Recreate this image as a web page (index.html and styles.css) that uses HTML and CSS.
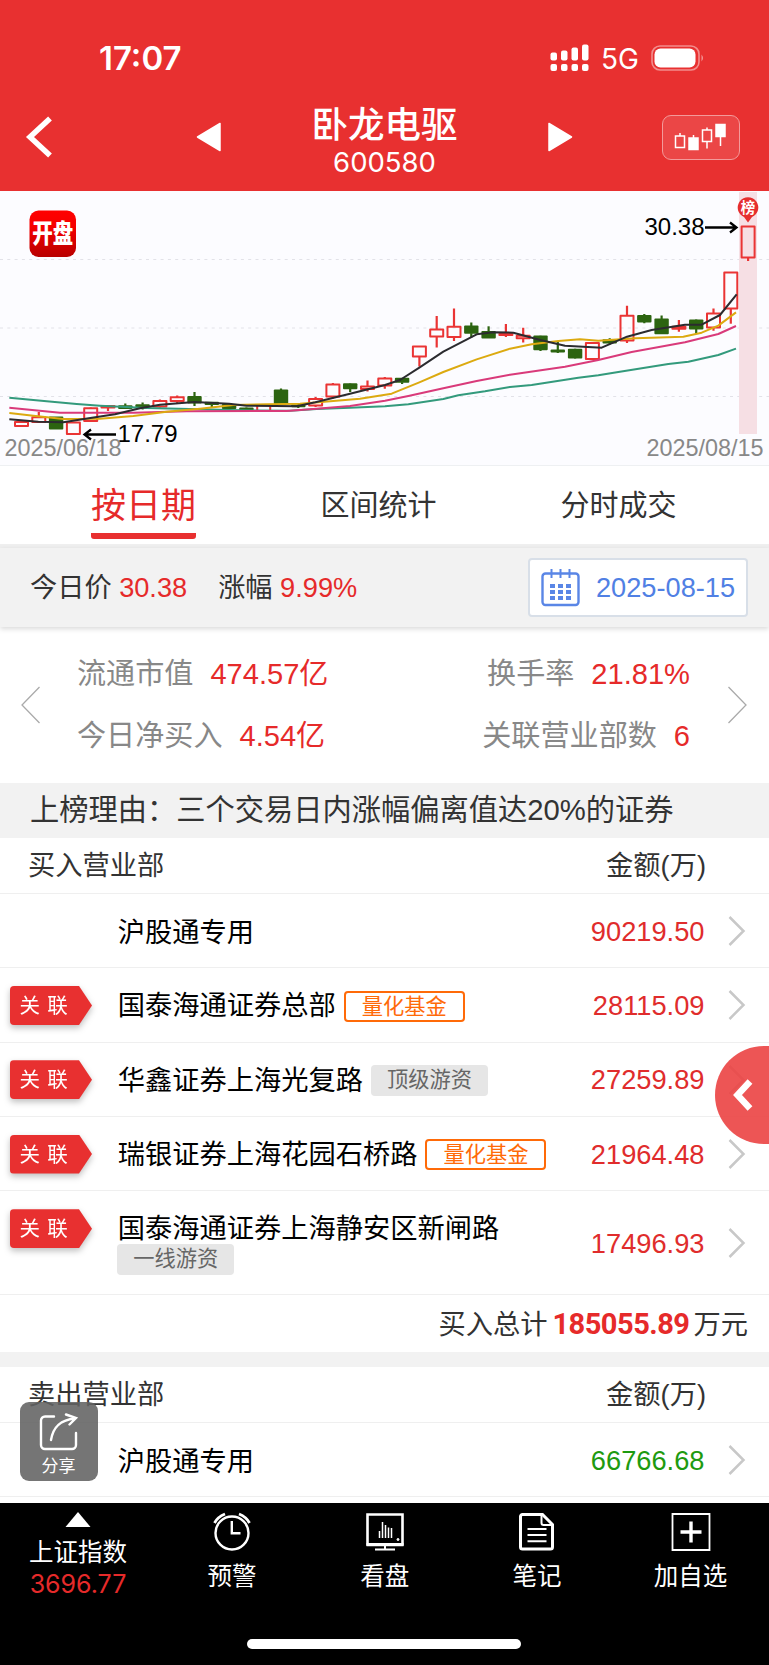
FILE: index.html
```html
<!DOCTYPE html>
<html lang="zh-CN">
<head>
    <meta charset="UTF-8">
    <meta name="viewport" content="width=device-width, initial-scale=1.0">
    <title>卧龙电驱 600580</title>
    <link rel="stylesheet" href="styles.css">
</head>
<body>
    <header class="header">
        <div class="status">
            <span class="time">17:07</span>
            <svg class="signal" width="40" height="28" viewBox="0 0 40 28" fill="#fff">
                <rect x="0.5" y="8.5" width="6.500" height="8" rx="2"/><rect x="11" y="6.5" width="6.500" height="10" rx="2"/>
                <rect x="21.5" y="3.5" width="6.500" height="13" rx="2"/><rect x="32" y="0.5" width="6.500" height="16" rx="2"/>
                <rect x="0.5" y="20" width="6.500" height="7" rx="2"/><rect x="11" y="20" width="6.500" height="7" rx="2"/>
                <rect x="21.5" y="20" width="6.500" height="7" rx="2"/><rect x="32" y="20" width="6.500" height="7" rx="2"/>
            </svg>
            <span class="net">5G</span>
            <svg class="battery" width="54" height="26" viewBox="0 0 54 26">
                <rect x="1" y="1" width="47" height="24" rx="8" fill="none" stroke="#fff" stroke-opacity=".45" stroke-width="1.6"/>
                <rect x="3.5" y="3.5" width="41" height="19" rx="6" fill="#fff"/>
                <path d="M50.5 9.5q3 3.5 0 7z" fill="#fff" fill-opacity=".5"/>
            </svg>
        </div>
        <div class="nav">
            <svg class="back" width="28" height="42" viewBox="0 0 28 42"><path d="M25 2.5L5 21L25 39.5" fill="none" stroke="#fff" stroke-width="5.5"/></svg>
            <svg class="prev" width="26" height="30" viewBox="0 0 26 30"><path d="M24 1.5V28.5L1.5 15z" fill="#fff" stroke="#fff" stroke-width="1.5" stroke-linejoin="round"/></svg>
            <div class="title">
                <h1>卧龙电驱</h1>
                <p>600580</p>
            </div>
            <svg class="next" width="26" height="30" viewBox="0 0 26 30"><path d="M2 1.5V28.5L24.5 15z" fill="#fff" stroke="#fff" stroke-width="1.5" stroke-linejoin="round"/></svg>
            <div class="kline-btn">
                <svg width="54" height="28" viewBox="0 0 54 28" fill="none" stroke="#fff" stroke-width="1.5">
                    <path d="M1.5 13h9v11.5h-9zM6 10v3M28.5 7h9v11.5h-9zM33 4.5v2.5M33 18.5v7M46.5 13v10M19.5 12v3"/>
                    <path d="M15 15h9v11.5h-9zM42 1.5h9v12h-9z" fill="#fff"/>
                </svg>
            </div>
        </div>
    </header>

    <section class="chart">
        <svg width="769" height="274" viewBox="0 0 769 274">
            <defs>
                <linearGradient id="logoBg" x1="0" y1="0" x2="0" y2="1">
                    <stop offset="0" stop-color="#ff0000"/>
                    <stop offset=".35" stop-color="#f50000"/>
                    <stop offset="1" stop-color="#b80000"/>
                </linearGradient>
            </defs>
            <g stroke="#e2e2e8" stroke-dasharray="3 4.3">
                <path d="M0 68.5H769M0 137H769M0 205.5H769"/>
            </g>
            <rect x="739" y="1" width="18" height="242" fill="#f6dfe4"/>
            <g id="candles"></g>
            <g transform="translate(0 -1) scale(.33333)" fill="none" stroke-width="6" stroke-linejoin="round">
                <polyline stroke="#339a7c" points="28,623 140,634 230,642 300,647 440,654 600,658 720,661 870,662 950,657 1050,653 1155,649 1225,643 1330,627 1375,616 1455,604 1530,591 1595,585 1735,563 1795,556 1855,546 2005,522 2065,515 2155,495 2208,476"/>
                <polyline stroke="#d93a7a" points="28,653 180,668 400,668 560,664 860,663 950,656 1050,648 1155,632 1225,618 1330,595 1430,573 1530,554 1695,530 1795,510 1895,486 2055,457 2155,432 2208,408"/>
                <polyline stroke="#dcaa10" points="28,669 100,677 190,687 300,686 400,678 500,665 600,656 700,645 800,643 900,641 1000,633 1080,626 1175,611 1258,577 1330,546 1430,508 1530,476 1595,463 1675,453 1740,448 1795,452 1905,445 2050,440 2105,428 2155,407 2208,367"/>
                <polyline stroke="#2b2b2f" points="28,688 115,695 190,697 271,684 345,673 420,655 480,644 583,636 687,641 740,647 890,649 946,637 1050,611 1155,585 1200,570 1258,533 1330,485 1430,433 1480,427 1540,428 1621,450 1695,467 1805,473 1881,440 1955,420 2055,404 2105,404 2160,375 2210,313"/>
            </g>
            <g fill="none" stroke="#000" stroke-width="2.3">
                <path d="M116 243.5H85M91 238.5L84.5 243.5L91 248.5M705 36.5H736M730 31.5L736.5 36.5L730 41.5"/>
            </g>
            <path d="M748 31.5l-4-5.5a10.3 10.3 0 1 1 8 0z" fill="#e62e2e"/>
            <text x="748" y="22.3" class="pin-text">榜</text>
            <text x="644.5" y="43.5" class="mark">30.38</text>
            <text x="117.5" y="250.8" class="mark">17.79</text>
            <text x="4.5" y="265" class="day">2025/06/18</text>
            <text x="763.5" y="265" class="day end">2025/08/15</text>
            <rect x="29.5" y="19.5" width="46.5" height="46.5" rx="9" fill="url(#logoBg)"/>
            <text transform="translate(52.8 52.3) scale(1 1.27)" class="logo-text">开盘</text>
        </svg>
    </section>

    <nav class="tabs">
        <div class="tab active"><span>按日期</span></div>
        <div class="tab"><span>区间统计</span></div>
        <div class="tab"><span>分时成交</span></div>
    </nav>

    <section class="price-bar">
        <span>今日价 <b>30.38</b></span>
        <span class="change">涨幅 <b>9.99%</b></span>
        <div class="date-box">
            <svg width="40" height="40" viewBox="0 0 40 40" fill="none" stroke="#5a86e6" stroke-width="2.4">
                <rect x="1.5" y="5.5" width="36" height="31.5" rx="3"/>
                <path d="M10.5 1v9M19.5 1v9M28.5 1v9" stroke-width="2"/>
                <path d="M9 18h21M9 24h21M9 30h21" stroke-width="4" stroke-dasharray="5 3"/>
            </svg>
            <span>2025-08-15</span>
        </div>
    </section>

    <section class="stats">
        <svg width="20" height="38" viewBox="0 0 20 38" fill="none" stroke="#aaa" stroke-width="1.3"><path d="M18.5 1L1 19L18.5 37"/></svg>
        <div class="stats-grid">
            <p>流通市值<b>474.57亿</b></p>
            <p>换手率<b>21.81%</b></p>
            <p>今日净买入<b>4.54亿</b></p>
            <p>关联营业部数<b>6</b></p>
        </div>
        <svg width="20" height="38" viewBox="0 0 20 38" fill="none" stroke="#aaa" stroke-width="1.3"><path d="M.5 1L18 19L.5 37"/></svg>
    </section>

    <div class="reason">上榜理由：三个交易日内涨幅偏离值达20%的证券</div>

    <section class="list">
        <div class="list-head"><span>买入营业部</span><span>金额(万)</span></div>
        <div class="row">
            <div class="name">沪股通专用</div>
            <div class="amount">90219.50</div>
            <svg class="arrow" viewBox="0 0 18 30"><path d="M1.5 1L15.5 15L1.5 29"/></svg>
        </div>
        <div class="row">
            <div class="link"><span>关 联</span></div>
            <div class="name">国泰海通证券总部<i class="tag quant">量化基金</i></div>
            <div class="amount">28115.09</div>
            <svg class="arrow" viewBox="0 0 18 30"><path d="M1.5 1L15.5 15L1.5 29"/></svg>
        </div>
        <div class="row">
            <div class="link"><span>关 联</span></div>
            <div class="name">华鑫证券上海光复路<i class="tag">顶级游资</i></div>
            <div class="amount">27259.89</div>
            <svg class="arrow" viewBox="0 0 18 30"><path d="M1.5 1L15.5 15L1.5 29"/></svg>
        </div>
        <div class="row">
            <div class="link"><span>关 联</span></div>
            <div class="name">瑞银证券上海花园石桥路<i class="tag quant">量化基金</i></div>
            <div class="amount">21964.48</div>
            <svg class="arrow" viewBox="0 0 18 30"><path d="M1.5 1L15.5 15L1.5 29"/></svg>
        </div>
        <div class="row tall">
            <div class="link"><span>关 联</span></div>
            <div class="name">国泰海通证券上海静安区新闸路<br><i class="tag">一线游资</i></div>
            <div class="amount">17496.93</div>
            <svg class="arrow" viewBox="0 0 18 30"><path d="M1.5 1L15.5 15L1.5 29"/></svg>
        </div>
        <div class="total"><span>买入总计</span><b>185055.89</b><span>万元</span></div>
    </section>

    <section class="list sell">
        <div class="list-head"><span>卖出营业部</span><span>金额(万)</span></div>
        <div class="row">
            <div class="name">沪股通专用</div>
            <div class="amount green">66766.68</div>
            <svg class="arrow" viewBox="0 0 18 30"><path d="M1.5 1L15.5 15L1.5 29"/></svg>
        </div>
    </section>

    <div class="drawer">
        <svg width="20" height="32" viewBox="0 0 20 32"><path d="M17 2.5L4.500 16L17 29.500" fill="none" stroke="#fff" stroke-width="6.5"/></svg>
    </div>

    <div class="share">
        <svg width="40" height="38" viewBox="0 0 40 38" fill="none" stroke="#fff" stroke-width="2.4" stroke-linecap="round">
            <path d="M15 3.5H6a4 4 0 0 0-4 4V32a4 4 0 0 0 4 4H33a4 4 0 0 0 4-4V20"/>
            <path d="M12 27C14 15 20 7 36 5.5M27 1.5L37 5L30.5 11.5"/>
        </svg>
        <span>分享</span>
    </div>

    <footer class="bottom">
        <div class="index">
            <svg width="26" height="15" viewBox="0 0 26 15"><path d="M13 0L25.5 15H.5z" fill="#fff"/></svg>
            <span>上证指数</span>
            <b>3696.77</b>
        </div>
        <div class="item">
            <svg width="40" height="40" viewBox="0 0 40 40" fill="none" stroke="#fff" stroke-width="2.4">
                <circle cx="20" cy="22" r="16.5"/>
                <path d="M19.8 10v12.300H28.5" stroke-width="2.4"/>
                <path d="M2.5 12Q5.5 6 13 3M37.5 12Q34.5 6 27 3" stroke-width="2.8"/>
            </svg>
            <span>预警</span>
        </div>
        <div class="item">
            <svg width="40" height="40" viewBox="0 0 40 40" fill="none" stroke="#fff">
                <path d="M2.5 3.5H37.5V33.5H2.5z" stroke-width="2.6"/>
                <path d="M1.5 33.7H38.5" stroke-width="3.2"/>
                <path d="M20 35v3M10 38.5H30" stroke-width="2"/>
                <path d="M14.5 20v7M17.5 11v16M20.5 14v13M23.5 16.5v10.5M26.5 17v10" stroke-width="1.5"/>
                <circle cx="33" cy="28.5" r="1" fill="#fff"/>
            </svg>
            <span>看盘</span>
        </div>
        <div class="item">
            <svg width="40" height="40" viewBox="0 0 40 40" fill="none" stroke="#fff" stroke-width="2.4">
                <path d="M5.5 3.5H25.5L35.500 13.5V36a2 2 0 0 1-2 2H5.5a2 2 0 0 1-2-2V5.5a2 2 0 0 1 2-2z" stroke-width="3"/>
                <path d="M24.5 4v8a2 2 0 0 0 2 2H35" stroke-width="2"/>
                <path d="M10.5 18h19M10.5 24h19M10.5 30.3h19" stroke-width="2"/>
            </svg>
            <span>笔记</span>
        </div>
        <div class="item">
            <svg width="40" height="40" viewBox="0 0 40 40" fill="none" stroke="#fff">
                <path d="M1.500 3H38.500V39H1.500z" stroke-width="1.8"/>
                <path d="M20 10.5v21M9.5 21h21" stroke-width="3.4"/>
            </svg>
            <span>加自选</span>
        </div>
        <div class="home-line"></div>
    </footer>

    <script>
        // [high, body top, body bottom, low, 1 = up / 0 = down]
        const candles = [
            [231, 231, 235, 235, 1], [221, 226.3, 231, 231, 1], [226, 226, 238, 238, 0], [231.5, 231.5, 243, 243, 1],
            [216.5, 217.3, 230, 230, 1], [214.5, 215, 216.5, 220, 1], [212.5, 214.8, 217.5, 218, 0], [211.5, 213.8, 216, 218.5, 0],
            [208.5, 210, 215.5, 216.5, 1], [204.5, 206.3, 210, 212, 1], [201, 205.5, 212, 215, 0], [211, 211.3, 213.5, 216, 0],
            [212.5, 213.5, 217.5, 218, 0], [216.5, 217, 220.5, 221, 0], [214, 214.3, 220, 220, 1], [197.5, 199, 212.5, 213, 0],
            [212.7, 214, 215.7, 217, 0], [206, 208, 214.5, 216, 1], [192, 193.5, 205.5, 207.5, 1], [192.3, 192.7, 197.7, 201, 0],
            [189.5, 195.5, 198, 200.5, 1], [186, 187.5, 194.5, 197.7, 1], [187, 187.3, 191.3, 193, 0], [155.5, 155.5, 165.5, 175.5, 1],
            [125, 138.5, 145.5, 156.5, 1], [117.5, 135.7, 146, 150, 1], [131.5, 135, 142.3, 146.5, 0], [135.3, 140.5, 147, 147, 0],
            [133, 143, 144, 146, 1], [136.7, 144.7, 147.3, 151.5, 1], [144.7, 145, 158.7, 160, 0], [150, 159, 161, 162, 0],
            [157.7, 158.3, 167, 167.5, 0], [152, 152, 168, 168, 1], [147.3, 148.7, 152, 153.5, 0], [114.7, 124.8, 149.5, 152, 1],
            [123, 124.5, 131, 132.3, 0], [124.5, 128, 142.7, 143, 0], [129, 135.7, 137.7, 140.7, 1], [128.5, 129, 138, 142.7, 0],
            [117.5, 122.5, 136.5, 139.7, 1], [81.5, 81.5, 117.5, 132.7, 1], [35.5, 35.5, 66.5, 70, 1]
        ];
        let svg = '';
        candles.forEach(([high, top, bottom, low, up], i) => {
            const x = 21.5 + i * 17.3;
            const color = up ? '#ea3434' : '#2c6410';
            svg += `<path d="M${x} ${high}V${top}M${x} ${bottom}V${low}" stroke="${color}" stroke-width="2.2"/>`;
            svg += up
                ? `<rect x="${x - 6.5}" y="${top}" width="13" height="${bottom - top}" fill="none" stroke="${color}" stroke-width="2" stroke-linejoin="round"/>`
                : `<rect x="${x - 7.2}" y="${top - .5}" width="14.4" height="${bottom - top + 1}" rx="1" fill="${color}"/>`;
        });
        document.getElementById('candles').innerHTML = svg;
    </script>
</body>
</html>
```

FILE: styles.css
```css
* {
    box-sizing: border-box;
}
body {
    margin: 0;
    width: 769px;
    height: 1665px;
    overflow: hidden;
    position: relative;
    display: flex;
    flex-direction: column;
    background: #fff;
    color: #333;
    font-family: "Liberation Sans", "Noto Sans CJK SC", sans-serif;
}
h1, p {
    margin: 0;
    font-weight: 400;
}
b {
    font-weight: 400;
    color: #e62a2a;
}
svg {
    display: block;
    flex: none;
}
section, nav, header, footer, .reason {
    flex: none;
}

/* header */
.header {
    height: 191px;
    background: #e83030;
    color: #fff;
    font-family: Inter, "Noto Sans CJK SC", sans-serif;
}
.status {
    height: 97px;
    padding: 18px 64px 0 99px;
    display: flex;
    align-items: center;
}
.time {
    font-size: 33px;
    font-weight: 600;
    margin-right: auto;
}
.net {
    font-size: 28px;
    margin: 2px 12px 0 11px;
}
.nav {
    height: 80px;
    padding: 0 29px 0 25px;
    display: flex;
    align-items: center;
}
.prev {
    margin-left: 143px;
}
.title {
    flex: 1;
    padding-top: 8px;
    text-align: center;
}
.title h1 {
    font-size: 36.5px;
    line-height: 42px;
    font-weight: 500;
}
.title p {
    font-size: 27.5px;
    line-height: 32px;
}
.next {
    margin-right: 89px;
}
.kline-btn {
    width: 78px;
    height: 45px;
    border: 1px solid #f39a9a;
    border-radius: 9px;
    background: #eb4646;
    display: flex;
    align-items: center;
    justify-content: center;
}

/* chart */
.chart {
    height: 275px;
    background: #fcfcff;
    border-bottom: 1px solid #eef0f2;
}
.mark {
    font-size: 24px;
    fill: #000;
}
.day {
    font-size: 23.4px;
    fill: #888;
}
.end {
    text-anchor: end;
}
.pin-text {
    font-size: 14.5px;
    font-weight: 700;
    fill: #fff;
    text-anchor: middle;
}
.logo-text {
    font-size: 20.5px;
    font-weight: 900;
    fill: #fff;
    text-anchor: middle;
}

/* tabs */
.tabs {
    height: 82px;
    padding: 0 27px 0 22px;
    display: grid;
    grid-template-columns: 243px 227px 1fr;
    border-bottom: 4px solid #efefef;
}
.tab {
    display: flex;
    justify-content: center;
    font-size: 29px;
    line-height: 80px;
}
.tab:last-child {
    padding-left: 3px;
}
.tab.active {
    font-size: 35px;
    color: #e62a2a;
}
.active span {
    height: 73px;
    background: linear-gradient(#e83030, #e83030) bottom / 100% 6px no-repeat;
    border-radius: 3px;
}

/* price */
.price-bar {
    height: 79px;
    padding: 0 21px 0 30px;
    display: flex;
    align-items: center;
    background: #f2f2f2;
    box-shadow: 0 2px 5px rgba(0, 0, 0, .15);
    font-size: 27.2px;
    line-height: 40px;
}
.change {
    margin-left: 31px;
}
.date-box {
    width: 220px;
    height: 59px;
    margin-left: auto;
    padding-left: 11px;
    display: flex;
    align-items: center;
    gap: 15px;
    background: #fff;
    border: 2px solid #d8dfe8;
    border-radius: 4px;
    color: #5080e4;
}

/* stats */
.stats {
    height: 156px;
    padding: 0 21px 0 21px;
    display: flex;
    align-items: center;
    font-size: 29.1px;
}
.stats-grid {
    flex: 1;
    padding: 0 38px 0 36px;
    display: grid;
    grid-template-columns: auto auto;
    line-height: 62.5px;
    color: #888;
}
.stats-grid p:nth-child(even) {
    text-align: right;
}
.stats-grid b {
    margin-left: 17px;
}
.reason {
    height: 55px;
    padding-left: 30px;
    background: #f2f2f2;
    font-size: 29.25px;
    line-height: 55px;
}

/* list */
.list {
    font-size: 27.25px;
}
.list-head {
    height: 56px;
    padding: 0 63px 0 28px;
    display: flex;
    justify-content: space-between;
    line-height: 56px;
    border-bottom: 1.5px solid #efefef;
}
.row {
    height: 74.3px;
    padding: 1px 23px 0 10px;
    display: grid;
    grid-template-columns: 107.7px 1fr auto 18px;
    align-items: center;
    border-bottom: 1.5px solid #efefef;
}
.row.tall {
    height: 104px;
}
.name {
    grid-column: 2;
    padding-top: 4px;
    color: #000;
    line-height: 30px;
    white-space: nowrap;
}
.amount {
    padding-top: 1px;
    color: #e02c2c;
    margin-right: 23.5px;
}
.green {
    color: #1e9a10;
}
.arrow {
    width: 18px;
    height: 30px;
    fill: none;
    stroke: #c8c8c8;
    stroke-width: 2.5;
}
.link {
    width: 82px;
    height: 39px;
    filter: drop-shadow(0 3px 3px rgba(0, 0, 0, .25));
}
.link span {
    display: block;
    padding-left: 9.5px;
    background: #e83030;
    border-radius: 4px 0 0 4px;
    clip-path: polygon(0 0, 69px 0, 100% 50%, 69px 100%, 0 100%);
    color: #fff;
    font-size: 20.5px;
    line-height: 39px;
    word-spacing: 1.5px;
}
.tall .link {
    align-self: start;
    margin-top: 17px;
}
.tag {
    display: inline-block;
    position: relative;
    top: -2px;
    height: 31px;
    margin-left: 8px;
    padding: 0 16px;
    background: #e6e6e6;
    border-radius: 4px;
    color: #666;
    font-size: 21.25px;
    font-style: normal;
    line-height: 31px;
    vertical-align: middle;
}
.tag.quant {
    background: #fff;
    border: 2px solid #ff6a08;
    color: #ff6a08;
    line-height: 28px;
}
.tall .tag {
    top: -1px;
    margin-left: -.5px;
}
.total {
    height: 57px;
    padding-right: 21px;
    display: flex;
    justify-content: flex-end;
    line-height: 59px;
}
.total b {
    margin: 0 4px 0 5px;
    font-family: Roboto, sans-serif;
    font-size: 29px;
    font-weight: 700;
    letter-spacing: -.5px;
}
.sell {
    border-top: 15px solid #f2f2f2;
}

/* floating buttons */
.drawer {
    position: absolute;
    right: 0;
    top: 1046px;
    width: 54px;
    height: 98px;
    padding: 33px 0 0 18px;
    background: rgba(235, 67, 67, .9);
    border-radius: 49px 0 0 49px;
}
.share {
    position: absolute;
    left: 19.5px;
    top: 1402px;
    width: 78px;
    height: 79px;
    padding-top: 11px;
    display: flex;
    flex-direction: column;
    align-items: center;
    background: rgba(98, 98, 98, .88);
    border-radius: 9px;
    color: #fff;
    font-size: 17px;
    line-height: 31px;
}

/* bottom bar */
.bottom {
    position: absolute;
    left: 0;
    bottom: 0;
    width: 769px;
    height: 162.5px;
    padding: 8px 2px 0 1px;
    display: grid;
    grid-template-columns: 154px 154px 151.5px 153px 154px;
    background: #000;
    color: #fff;
    font-size: 24.5px;
    line-height: 34px;
}
.item, .index {
    display: flex;
    flex-direction: column;
    align-items: center;
}
.item span {
    margin-top: 9px;
}
.index span {
    margin-top: 9px;
}
.index svg {
    margin-top: 1px;
}
.index b {
    font-family: Inter, sans-serif;
    font-size: 25px;
    line-height: 28px;
}
.home-line {
    position: absolute;
    left: 247px;
    bottom: 16px;
    width: 274px;
    height: 10px;
    background: #fff;
    border-radius: 5px;
}
```
